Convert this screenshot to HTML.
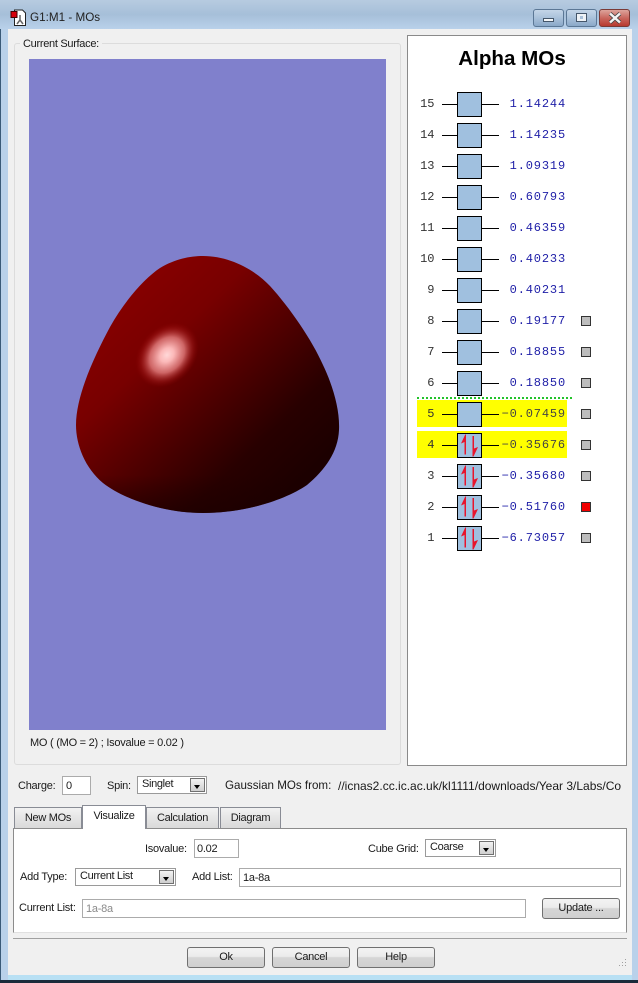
<!DOCTYPE html>
<html><head><meta charset="utf-8"><style>
html,body{margin:0;padding:0;background:#000}
#w{position:relative;width:638px;height:983px;overflow:hidden;background:#b9d1ea;font-family:"Liberation Sans",sans-serif;font-size:11px;letter-spacing:-.25px;color:#1a1a1a}
#w div{position:absolute;box-sizing:border-box;white-space:nowrap}
.t{line-height:14px}
.in{background:#fff;border:1px solid #ababab;padding-left:3px;font-size:11px;line-height:18px}
.cb{background:#fff;border:1px solid #9a9a9a;padding-left:4px;line-height:14px;font-size:11px;letter-spacing:-.35px}
.ar{right:1px;top:1px;bottom:1px;width:15px;background:linear-gradient(#f2f2f2,#cfcfcf);border:1px solid #707070}
.ar:after{content:"";position:absolute;left:3px;top:6px;border:3.5px solid transparent;border-top:4px solid #000;border-bottom:0}
.bt{background:linear-gradient(#f3f3f3 0,#ebebeb 45%,#d6d6d6 50%,#cfcfcf 100%);border:1px solid #707070;border-radius:3px;text-align:center;line-height:19px;font-size:11px}
.tab{background:linear-gradient(#f2f2f2,#d9d9d9);border:1px solid #898c95;border-bottom:0;text-align:center;line-height:21px;font-size:11px;letter-spacing:-.3px}
.n{left:417px;width:17.5px;text-align:right;font:12px/14px "Liberation Mono",monospace;letter-spacing:0;color:#333}
.v{left:499px;width:67px;text-align:right;font:12px/14px "Liberation Mono",monospace;letter-spacing:.85px;color:#2020a8}
.l{height:1px;background:#000}
.b{left:457px;width:25px;height:25px;background:#a0c0df;border:1px solid #000}
.s{left:581px;width:10px;height:10px;background:#bdbdbd;border:1px solid #333}
</style></head><body><div id="w">
<div style="left:0;top:0;width:638px;height:29px;background:linear-gradient(#b7cbe0,#a6bfd9 50%,#b9d1ea)"></div>
<div style="left:0;top:29px;width:1px;height:954px;background:#3a5a78"></div>
<div style="left:8px;top:975px;width:624px;height:5px;background:#b8e0f4"></div>
<div style="left:0;top:980px;width:638px;height:3px;background:#1a2a3a"></div>
<div style="left:8px;top:29px;width:624px;height:946px;background:#f0f0f0"></div>

<svg style="position:absolute;left:10px;top:9px" width="18" height="18" viewBox="0 0 18 18"><path d="M4.500 1h8l3 3v12.500h-11z" fill="#fff" stroke="#222"/><rect x="1" y="2.500" width="6" height="6" fill="#d8000c" stroke="#400"/><path d="M10 6v5M10 11L7 15M10 11L13 15" stroke="#666" stroke-width="1.500" fill="none"/></svg>
<div class="t" style="left:30px;top:11px;font-size:11.700px;letter-spacing:0;color:#222">G1:M1 - MOs</div>

<div style="left:533px;top:9px;width:31px;height:18px;border:1px solid #5b7795;border-radius:3px;background:linear-gradient(#c4d5e8,#a9c1da 50%,#8aa8c8)"></div>
<div style="left:543px;top:18px;width:11px;height:4px;background:#f4f6f8;border:1px solid #44566a"></div>
<div style="left:566px;top:9px;width:31px;height:18px;border:1px solid #5b7795;border-radius:3px;background:linear-gradient(#c4d5e8,#a9c1da 50%,#8aa8c8)"></div>
<div style="left:576px;top:13px;width:11px;height:9px;background:#eef2f6;border:1px solid #44566a"></div>
<div style="left:580px;top:16px;width:3px;height:3px;background:#a9c1da;border:0"></div>
<div style="left:599px;top:9px;width:31px;height:18px;border:1px solid #7a3a36;border-radius:3px;background:linear-gradient(#dda49c,#c9675e 50%,#b83a2f)"></div>
<svg style="position:absolute;left:608px;top:12px" width="14" height="12" viewBox="0 0 14 12"><path d="M2 1.500L12 10.500M12 1.500L2 10.500" stroke="#444" stroke-width="4"/><path d="M2 1.500L12 10.500M12 1.500L2 10.500" stroke="#f4f4f4" stroke-width="2.500"/></svg>

<div style="left:14px;top:43px;width:387px;height:722px;border:1px solid #dcdcdc;border-radius:3px"></div>
<div class="t" style="left:20px;top:37px;background:#f0f0f0;padding:0 3px;font-size:11px;letter-spacing:-.3px">Current Surface:</div>
<div style="left:29px;top:59px;width:357px;height:671px;background:#8080cc"></div>

<svg style="position:absolute;left:60px;top:240px" width="300" height="290" viewBox="60 240 300 290">
<defs>
<linearGradient id="g" gradientUnits="userSpaceOnUse" x1="90" y1="300" x2="280" y2="500">
<stop offset="0" stop-color="#8a0000"/><stop offset=".3" stop-color="#780000"/><stop offset=".55" stop-color="#500000"/><stop offset=".8" stop-color="#280000"/><stop offset="1" stop-color="#1c0000"/></linearGradient>
<radialGradient id="h">
<stop offset="0" stop-color="#ffd8d8"/><stop offset=".22" stop-color="#fbb8b8"/><stop offset=".55" stop-color="#d87070" stop-opacity=".9"/><stop offset=".82" stop-color="#a82020" stop-opacity=".4"/><stop offset="1" stop-color="#8c0000" stop-opacity="0"/></radialGradient>
<linearGradient id="k" gradientUnits="userSpaceOnUse" x1="200" y1="475" x2="200" y2="513"><stop offset="0" stop-color="#1c0000" stop-opacity="0"/><stop offset="1" stop-color="#1c0000" stop-opacity=".6"/></linearGradient>
</defs>
<path fill="url(#g)" d="M203 256C230 256 255 270 270 286C290 308 312 340 323 365C333 386 340 410 339 430C338 452 325 470 307 485C285 500 245 513 203 513C165 513 125 500 103 483C85 468 76 445 76 425C76 395 95 355 110 327C125 300 145 278 160 268C175 259 190 256 203 256Z"/>
<path fill="url(#k)" d="M203 256C230 256 255 270 270 286C290 308 312 340 323 365C333 386 340 410 339 430C338 452 325 470 307 485C285 500 245 513 203 513C165 513 125 500 103 483C85 468 76 445 76 425C76 395 95 355 110 327C125 300 145 278 160 268C175 259 190 256 203 256Z"/>
<ellipse cx="167" cy="355" rx="36" ry="28" transform="rotate(-48 167 355)" fill="url(#h)"/>
</svg>

<div class="t" style="left:30px;top:736px">MO ( (MO = 2) ; Isovalue = 0.02 )</div>

<div style="left:407px;top:35px;width:220px;height:731px;background:#fff;border:1px solid #8a8a8a"></div>
<div style="left:407px;top:47px;width:210px;text-align:center;font:bold 20.600px/24px 'Liberation Sans',sans-serif;letter-spacing:0;color:#000">Alpha MOs</div>

<div style="left:417px;top:400px;width:150px;height:27px;background:#ffff00"></div>
<div style="left:417px;top:431px;width:150px;height:27px;background:#ffff00"></div>
<div style="left:417px;top:397px;width:155px;height:0;border-top:2px dotted #22c22a"></div>

<div class="n" style="top:97px">15</div><div class="l" style="left:442px;top:104px;width:57px"></div><div class="b" style="top:92px"></div><div class="v" style="top:97px">1.14244</div>
<div class="n" style="top:128px">14</div><div class="l" style="left:442px;top:135px;width:57px"></div><div class="b" style="top:123px"></div><div class="v" style="top:128px">1.14235</div>
<div class="n" style="top:159px">13</div><div class="l" style="left:442px;top:166px;width:57px"></div><div class="b" style="top:154px"></div><div class="v" style="top:159px">1.09319</div>
<div class="n" style="top:190px">12</div><div class="l" style="left:442px;top:197px;width:57px"></div><div class="b" style="top:185px"></div><div class="v" style="top:190px">0.60793</div>
<div class="n" style="top:221px">11</div><div class="l" style="left:442px;top:228px;width:57px"></div><div class="b" style="top:216px"></div><div class="v" style="top:221px">0.46359</div>
<div class="n" style="top:252px">10</div><div class="l" style="left:442px;top:259px;width:57px"></div><div class="b" style="top:247px"></div><div class="v" style="top:252px">0.40233</div>
<div class="n" style="top:283px">9</div><div class="l" style="left:442px;top:290px;width:57px"></div><div class="b" style="top:278px"></div><div class="v" style="top:283px">0.40231</div>
<div class="n" style="top:314px">8</div><div class="l" style="left:442px;top:321px;width:57px"></div><div class="b" style="top:309px"></div><div class="v" style="top:314px">0.19177</div><div class="s" style="top:316px"></div>
<div class="n" style="top:345px">7</div><div class="l" style="left:442px;top:352px;width:57px"></div><div class="b" style="top:340px"></div><div class="v" style="top:345px">0.18855</div><div class="s" style="top:347px"></div>
<div class="n" style="top:376px">6</div><div class="l" style="left:442px;top:383px;width:57px"></div><div class="b" style="top:371px"></div><div class="v" style="top:376px">0.18850</div><div class="s" style="top:378px"></div>
<div class="n" style="top:407px">5</div><div class="l" style="left:442px;top:414px;width:57px"></div><div class="b" style="top:402px"></div><div class="v" style="top:407px;color:#444">&minus;0.07459</div><div class="s" style="top:409px"></div>
<div class="n" style="top:438px">4</div><div class="l" style="left:442px;top:445px;width:57px"></div><div class="b" style="top:433px"></div><div class="v" style="top:438px;color:#444">&minus;0.35676</div><div class="s" style="top:440px"></div>
<div class="n" style="top:469px">3</div><div class="l" style="left:442px;top:476px;width:57px"></div><div class="b" style="top:464px"></div><div class="v" style="top:469px">&minus;0.35680</div><div class="s" style="top:471px"></div>
<div class="n" style="top:500px">2</div><div class="l" style="left:442px;top:507px;width:57px"></div><div class="b" style="top:495px"></div><div class="v" style="top:500px">&minus;0.51760</div><div class="s" style="top:502px;background:#f00000"></div>
<div class="n" style="top:531px">1</div><div class="l" style="left:442px;top:538px;width:57px"></div><div class="b" style="top:526px"></div><div class="v" style="top:531px">&minus;6.73057</div><div class="s" style="top:533px"></div>

<svg style="position:absolute;left:457px;top:433px" width="25" height="25" viewBox="0 0 25 25"><path d="M8.250 1.500L4 10.500L7.500 9V21.500H9V1.500z" fill="#e8142c"/><path d="M15.500 3H17V15.500L21 14L16.500 23.500H15.500z" fill="#e8142c"/></svg>
<svg style="position:absolute;left:457px;top:464px" width="25" height="25" viewBox="0 0 25 25"><path d="M8.250 1.500L4 10.500L7.500 9V21.500H9V1.500z" fill="#e8142c"/><path d="M15.500 3H17V15.500L21 14L16.500 23.500H15.500z" fill="#e8142c"/></svg>
<svg style="position:absolute;left:457px;top:495px" width="25" height="25" viewBox="0 0 25 25"><path d="M8.250 1.500L4 10.500L7.500 9V21.500H9V1.500z" fill="#e8142c"/><path d="M15.500 3H17V15.500L21 14L16.500 23.500H15.500z" fill="#e8142c"/></svg>
<svg style="position:absolute;left:457px;top:526px" width="25" height="25" viewBox="0 0 25 25"><path d="M8.250 1.500L4 10.500L7.500 9V21.500H9V1.500z" fill="#e8142c"/><path d="M15.500 3H17V15.500L21 14L16.500 23.500H15.500z" fill="#e8142c"/></svg>

<div class="t" style="left:18px;top:779px">Charge:</div>
<div class="in" style="left:62px;top:776px;width:29px;height:19px">0</div>
<div class="t" style="left:107px;top:779px">Spin:</div>
<div class="cb" style="left:137px;top:776px;width:70px;height:18px">Singlet<div class="ar"></div></div>
<div class="t" style="left:225px;top:779px;font-size:11.600px;letter-spacing:0">Gaussian MOs from:</div>
<div class="t" style="left:338px;top:779px;width:284px;overflow:hidden;font-size:12px;letter-spacing:0">//icnas2.cc.ic.ac.uk/kl1111/downloads/Year 3/Labs/Co</div>

<div style="left:13px;top:828px;width:614px;height:105px;background:#fff;border:1px solid #8c8c8c;border-bottom:1px solid #e0e0e0"></div>
<div class="tab" style="left:14px;top:807px;width:68px;height:21px">New MOs</div>
<div class="tab" style="left:146px;top:807px;width:73px;height:21px">Calculation</div>
<div class="tab" style="left:220px;top:807px;width:61px;height:21px">Diagram</div>
<div class="tab" style="left:82px;top:805px;width:64px;height:24px;background:#fff;z-index:2;line-height:20px">Visualize</div>

<div class="t" style="left:145px;top:842px">Isovalue:</div>
<div class="in" style="left:194px;top:839px;width:45px;height:19px;padding-left:2px">0.02</div>
<div class="t" style="left:368px;top:842px">Cube Grid:</div>
<div class="cb" style="left:425px;top:839px;width:71px;height:18px">Coarse<div class="ar"></div></div>
<div class="t" style="left:20px;top:870px">Add Type:</div>
<div class="cb" style="left:75px;top:868px;width:101px;height:18px">Current List<div class="ar"></div></div>
<div class="t" style="left:192px;top:870px">Add List:</div>
<div class="in" style="left:239px;top:868px;width:382px;height:19px">1a-8a</div>
<div class="t" style="left:19px;top:901px">Current List:</div>
<div class="in" style="left:82px;top:899px;width:444px;height:19px;color:#8a8a8a">1a-8a</div>
<div class="bt" style="left:542px;top:898px;width:78px;height:21px">Update ...</div>

<div style="left:13px;top:938px;width:614px;height:1px;background:#a0a0a0"></div>
<div class="bt" style="left:187px;top:947px;width:78px;height:21px">Ok</div>
<div class="bt" style="left:272px;top:947px;width:78px;height:21px">Cancel</div>
<div class="bt" style="left:357px;top:947px;width:78px;height:21px">Help</div>
<svg style="position:absolute;left:616px;top:958px" width="12" height="12"><path d="M9 1h1v1H9zM6 4h1v1H6zM9 4h1v1H9zM3 7h1v1H3zM6 7h1v1H6zM9 7h1v1H9z" fill="#a0a0a0"/></svg>
</div></body></html>
